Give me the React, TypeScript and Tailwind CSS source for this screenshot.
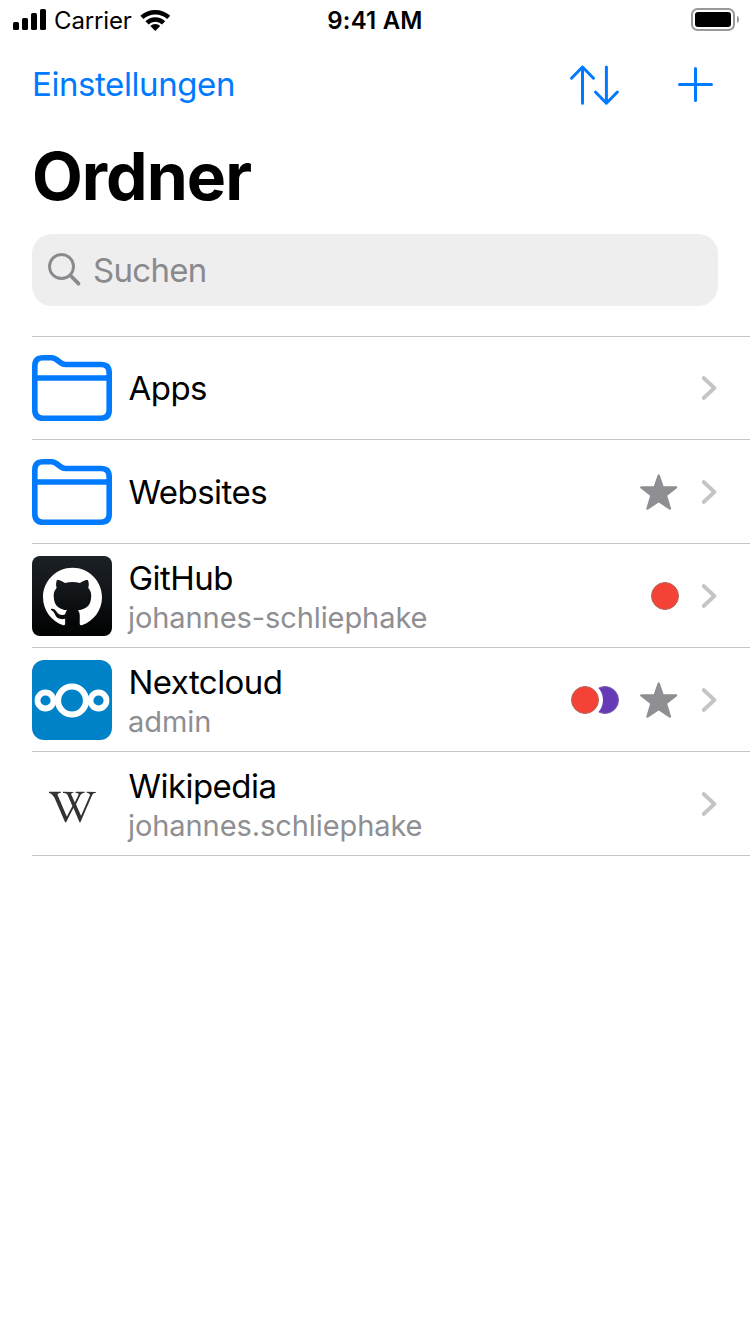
import type { ReactNode } from 'react';
import { FaWikipediaW } from 'react-icons/fa';
import { SiGithub } from 'react-icons/si';

function SignalIcon() {
  return (
    <svg className="block h-[22px] w-[34px]" viewBox="0 0 34 22">
      <rect x="0" y="13" width="6" height="8" rx="1.6" />
      <rect x="9" y="9" width="6" height="12" rx="1.6" />
      <rect x="18" y="4" width="6" height="17" rx="1.6" />
      <rect x="27" y="0" width="6" height="21" rx="1.6" />
    </svg>
  );
}

function WifiIcon() {
  return (
    <svg className="block h-[22px] w-[30px]" viewBox="0 0 30 22" fill="none" stroke="#000" strokeWidth="4.5">
      <path d="M1.900 8.400a19.750 19.750 0 0 1 26.800 0" />
      <path d="M7 13.900a11.750 11.750 0 0 1 16.600 0" />
      <path d="M15.300 22l-4.900-5a7 7 0 0 1 9.800 0z" fill="#000" stroke="none" />
    </svg>
  );
}

function BatteryIcon() {
  return (
    <svg className="block h-[24px] w-[49px]" viewBox="0 0 49 24">
      <rect x="1" y="1" width="42" height="21" rx="5.5" fill="none" stroke="#999" strokeWidth="2" />
      <rect x="4" y="4" width="36" height="15" rx="3" />
      <path d="M46 8c1.600.6 2 1.800 2 3.500s-.4 2.900-2 3.500z" fill="#999" />
    </svg>
  );
}

function SortIcon() {
  return (
    <svg className="block h-[44px] w-[52px]" viewBox="0 0 52 44" fill="none" stroke="#007aff" strokeWidth="3" strokeLinecap="round" strokeLinejoin="round">
      <path d="M14.500 41.200V5M3.500 16.200l11-11.200 11 11.200" />
      <path d="M38.400 5v36.200M27.400 30l11 11.200 11-11.200" />
    </svg>
  );
}

function PlusIcon() {
  return (
    <svg className="block h-[36px] w-[37px]" viewBox="0 0 37 36" fill="none" stroke="#007aff" strokeWidth="3" strokeLinecap="round">
      <path d="M18.500 2.500v32M2.500 18.500h32" />
    </svg>
  );
}

function SearchIcon() {
  return (
    <svg className="block h-[34px] w-[34px]" viewBox="0 0 34 34" fill="none" stroke="#8a8a8e" strokeLinecap="round">
      <circle cx="13.500" cy="13.500" r="12" strokeWidth="2.900" />
      <path d="M23 23l7.500 7.600" strokeWidth="3.800" />
    </svg>
  );
}

function FolderIcon() {
  return (
    <svg className="block h-[66px] w-20" viewBox="0 0 80 66" fill="none" stroke="#007aff" strokeWidth="5.600">
      <path d="M2.800 11Q2.800 2.800 11 2.800H19.500C26 2.800 27 9.500 33.500 9.500H69Q77.200 9.500 77.200 17.700V55Q77.200 63.200 69 63.200H11Q2.800 63.200 2.800 55Z" />
      <path d="M3 23H77" />
    </svg>
  );
}

function StarIcon() {
  return (
    <svg className="mr-px -ml-px block h-[38px] w-[38px]" viewBox="0 0 38 38" fill="#8e8e93" stroke="#8e8e93" strokeWidth="2.400" strokeLinejoin="round">
      <path d="M18.700 2.700l4 11.700h13.400L25.900 22.300l4 13.200L18.700 28 7.500 35.500l4-13.200L1.300 14.400h13.400z" />
    </svg>
  );
}

function ChevronIcon() {
  return (
    <svg className="block h-[26px] w-[16px]" viewBox="0 0 16 26" fill="none" stroke="#c5c5c7" strokeWidth="3.800" strokeLinecap="round" strokeLinejoin="round">
      <path d="M2.700 3l10.700 10-10.700 10" />
    </svg>
  );
}

function RedTag() {
  return (
    <svg className="block h-7 w-7" viewBox="0 0 28 28">
      <circle cx="14" cy="14" r="13.500" fill="#f44336" stroke="#b5665f" />
    </svg>
  );
}

function TwoTags() {
  return (
    <svg className="block h-7 w-12" viewBox="0 0 48 28">
      <circle cx="34" cy="14" r="13.500" fill="#673ab7" stroke="#7a62a6" />
      <circle cx="14" cy="14" r="18" fill="#fff" />
      <circle cx="14" cy="14" r="13.500" fill="#f44336" stroke="#b5665f" />
    </svg>
  );
}

function GithubLogo() {
  return (
    <div className="flex h-20 w-20 items-center justify-center rounded-lg bg-linear-to-b from-[#1c2126] via-[#111417] to-[#020303]">
      <SiGithub className="h-[59px] w-[59px] text-white" />
    </div>
  );
}

function NextcloudLogo() {
  return (
    <svg className="block h-20 w-20" viewBox="0 0 80 80" fill="none" stroke="#fff">
      <rect width="80" height="80" rx="12" fill="#0082c9" stroke="none" />
      <circle cx="40" cy="40.500" r="14" strokeWidth="6.200" />
      <circle cx="13.500" cy="40.500" r="8" strokeWidth="5.800" />
      <circle cx="66.500" cy="40.500" r="8" strokeWidth="5.800" />
    </svg>
  );
}

function WikipediaLogo() {
  return (
    <div className="flex h-20 w-20 items-center justify-center pt-[5px]">
      <FaWikipediaW className="h-[38px] w-[47px] text-[#333]" />
    </div>
  );
}

type RowProps = { icon: ReactNode; title: string; subtitle?: string; extra?: ReactNode; first?: boolean };

function Row({ icon, title, subtitle, extra, first }: RowProps) {
  return (
    <li className={`flex items-start border-b border-[#c6c6c8] pr-[33px] ${first ? 'h-[103px] pt-[11px]' : 'h-[104px] pt-3'}`}>
      <div className="flex h-20 w-20 shrink-0 items-center">{icon}</div>
      <div className="ml-4 flex h-20 grow flex-col justify-center">
        <span className="pl-[0.5px] text-[33px] leading-[42px] tracking-[-0.54px]">{title}</span>
        {subtitle && <span className="-mb-px text-[29px] leading-[37px] tracking-[-0.08px] text-[#8e8e93]">{subtitle}</span>}
      </div>
      <div className="flex h-20 items-center gap-[22px]">
        {extra}
        <ChevronIcon />
      </div>
    </li>
  );
}

export default function App() {
  return (
    <main className="h-[1334px] w-[750px] overflow-hidden bg-white font-['Inter',sans-serif] text-black">
      <header className="grid h-10 grid-cols-[1fr_auto_1fr] items-center pr-[10px] pl-[13px]">
        <div className="flex items-center">
          <SignalIcon />
          <span className="ml-[7px] pt-0.5 text-[24px] leading-8 tracking-[-0.15px]">Carrier</span>
          <span className="ml-2"><WifiIcon /></span>
        </div>
        <span className="pt-0.5 pr-[3px] text-[24px] leading-8 font-semibold tracking-[0.2px]">9:41 AM</span>
        <div className="flex justify-end"><BatteryIcon /></div>
      </header>
      <nav className="flex h-[88px] items-center pr-9 pl-8 text-[#007aff]">
        <span className="grow text-[33px] leading-[44px] tracking-[-0.42px]">Einstellungen</span>
        <SortIcon />
        <span className="ml-[57px]"><PlusIcon /></span>
      </nav>
      <h1 className="h-[106px] pl-8 text-[66px] leading-[97px] font-bold tracking-[-1px]">Ordner</h1>
      <div className="mx-8 flex h-[72px] items-center rounded-[20px] bg-[#eeeeef] pl-4 text-[33px] text-[#8a8a8e]">
        <SearchIcon />
        <span className="ml-[11px] leading-[44px] tracking-[-0.7px]">Suchen</span>
      </div>
      <ul className="mt-[30px] ml-8 border-t border-[#c6c6c8]">
        <Row first icon={<FolderIcon />} title="Apps" />
        <Row icon={<FolderIcon />} title="Websites" extra={<StarIcon />} />
        <Row icon={<GithubLogo />} title="GitHub" subtitle="johannes-schliephake" extra={<RedTag />} />
        <Row icon={<NextcloudLogo />} title="Nextcloud" subtitle="admin" extra={<><TwoTags /><StarIcon /></>} />
        <Row icon={<WikipediaLogo />} title="Wikipedia" subtitle="johannes.schliephake" />
      </ul>
    </main>
  );
}
